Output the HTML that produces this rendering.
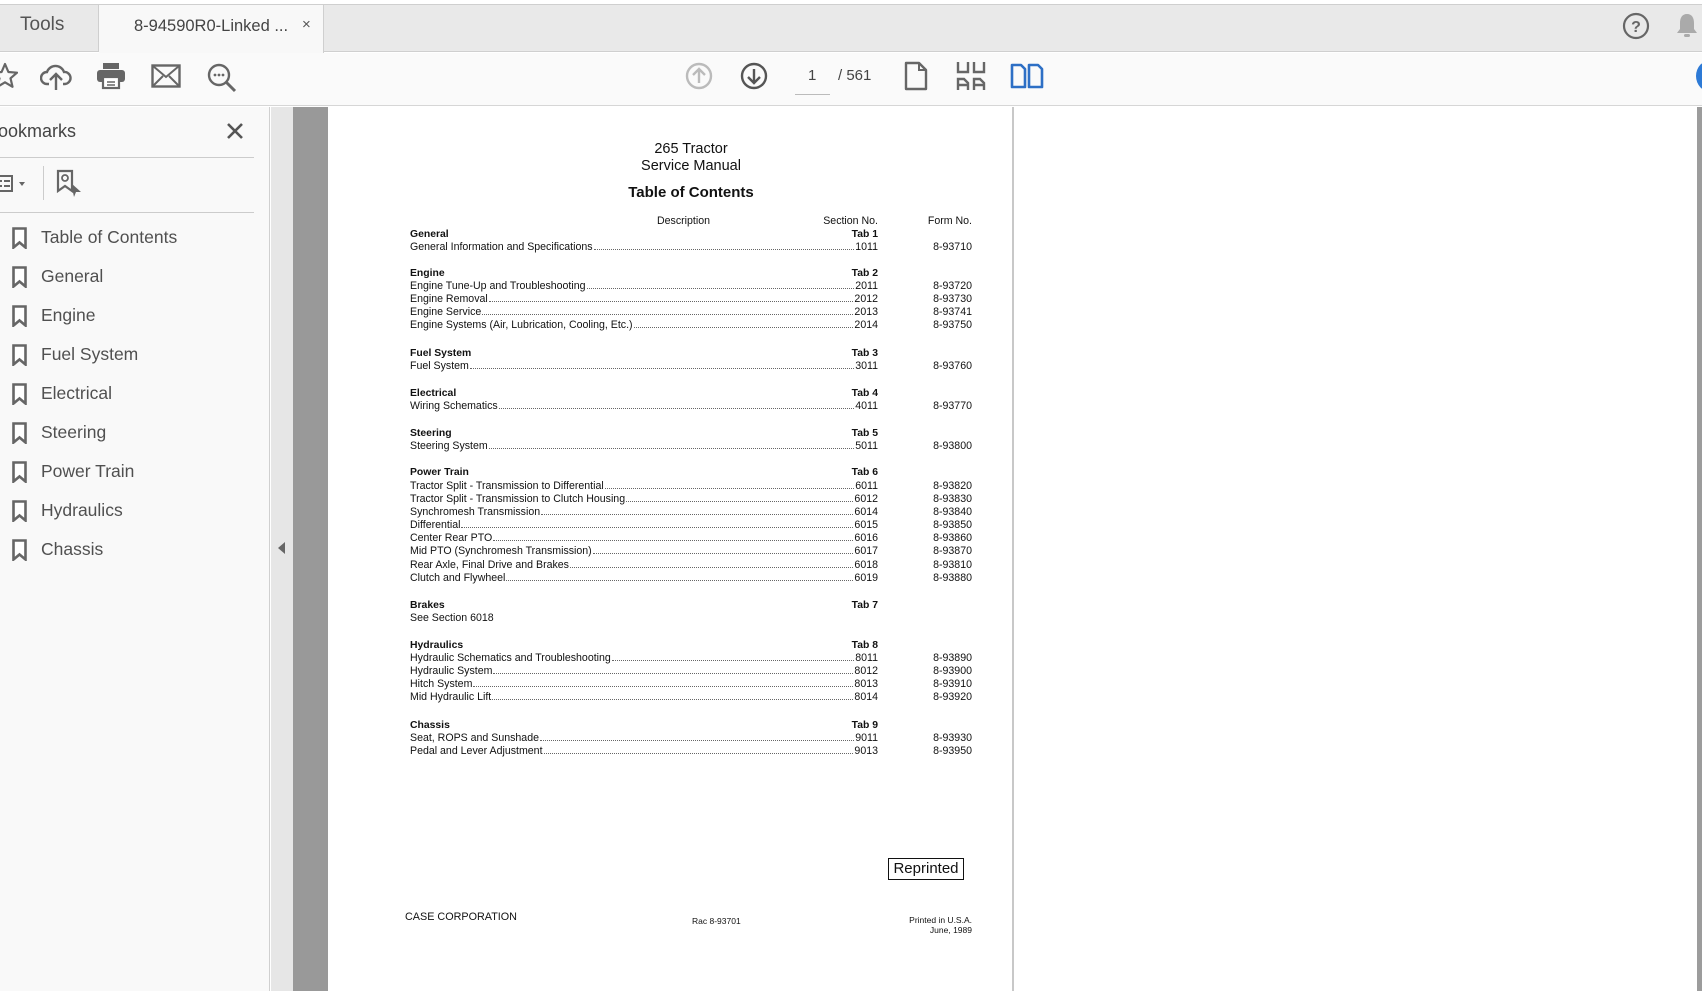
<!DOCTYPE html>
<html><head><meta charset="utf-8"><style>
*{margin:0;padding:0;box-sizing:border-box}
body{width:1702px;height:991px;overflow:hidden;background:#fff;font-family:"Liberation Sans",sans-serif;position:relative}
.a{position:absolute}
.ui{font-family:"Liberation Sans","DejaVu Sans",sans-serif}
.pg{font-family:"Liberation Sans",sans-serif;color:#111;font-size:10.6px;white-space:nowrap}
.row{position:absolute;left:410px;width:468px;display:flex;align-items:baseline;height:13px;line-height:13px}
.row .f{flex:1;border-bottom:1px dotted #666;margin:0 1px 3px 1px;height:1px}
.fm{position:absolute;right:730px;line-height:13px}
.hd{position:absolute;left:410px;width:468px;line-height:13px;font-weight:bold;font-size:10.4px}
.hd span{float:right;font-weight:bold}
.bm{position:absolute;left:12px;height:39px;display:flex;align-items:center;color:#505050;font-size:17.5px;font-family:"Liberation Sans",sans-serif}
.bm svg{margin-right:14px}
</style></head><body>
<div class="a" style="left:0;top:0;width:1702px;height:4px;background:#fff"></div>
<div class="a" style="left:0;top:4px;width:1702px;height:1px;background:#cfcfcf"></div>
<div class="a" style="left:0;top:5px;width:1702px;height:47px;background:#e9e9e9;border-bottom:1px solid #cfcfcf"></div>
<div class="a ui" style="left:20px;top:14px;font-size:19px;color:#555">Tools</div>
<div class="a" style="left:98px;top:5px;width:1px;height:47px;background:#cfcfcf"></div>
<div class="a" style="left:99px;top:5px;width:225px;height:48px;background:#f8f8f8;border-right:1px solid #cfcfcf"></div>
<div class="a ui" style="left:134px;top:17px;font-size:16.5px;color:#444">8-94590R0-Linked ...</div>
<div class="a ui" style="left:302px;top:16px;font-size:15px;color:#555">×</div>
<svg class="a" style="left:1622px;top:12px" width="28" height="28" viewBox="0 0 28 28"><circle cx="14" cy="14" r="12" fill="none" stroke="#666" stroke-width="2.2"/><text x="14" y="20" text-anchor="middle" font-family="Liberation Sans" font-weight="bold" font-size="16" fill="#666">?</text></svg>
<svg class="a" style="left:1675px;top:12px" width="24" height="28" viewBox="0 0 24 28"><path d="M12 2c-5 0-7 4-7 9v6l-3 4h20l-3-4v-6c0-5-2-9-7-9z" fill="#aaa"/><rect x="9" y="22" width="6" height="3" rx="1.5" fill="#aaa"/></svg>
<div class="a" style="left:0;top:53px;width:1702px;height:53px;background:#fafafa;border-bottom:1px solid #d6d6d6"></div>
<svg class="a" style="left:-8px;top:62px" width="26" height="28" viewBox="0 0 26 28"><path d="M13 2l3.4 8 8.6.7-6.5 5.6 2 8.5L13 20.3 5.5 24.8l2-8.5L1 10.7 9.6 10z" fill="none" stroke="#666" stroke-width="2.2" stroke-linejoin="round"/></svg>
<svg class="a" style="left:40px;top:62px" width="32" height="30" viewBox="0 0 32 30"><path d="M9 22H7a6 6 0 0 1 0-12 9 9 0 0 1 17 0 6 6 0 0 1 1 12h-2" fill="none" stroke="#666" stroke-width="2.4"/><path d="M16 28V13M10 18l6-6 6 6" fill="none" stroke="#666" stroke-width="2.4"/></svg>
<svg class="a" style="left:96px;top:62px" width="30" height="28" viewBox="0 0 30 28"><rect x="7" y="1" width="16" height="6" fill="#666"/><rect x="1" y="8" width="28" height="12" rx="3" fill="#666"/><rect x="7" y="15" width="16" height="11" fill="#fff" stroke="#666" stroke-width="2.2"/><path d="M11 20h8M11 23h8" stroke="#666" stroke-width="1.4"/></svg>
<svg class="a" style="left:151px;top:64px" width="30" height="24" viewBox="0 0 30 24"><rect x="1.5" y="1.5" width="27" height="21" fill="none" stroke="#666" stroke-width="2.4"/><path d="M2 2l13 11L28 2M2 22l10-10M28 22L18 12" fill="none" stroke="#666" stroke-width="2"/></svg>
<svg class="a" style="left:206px;top:62px" width="32" height="32" viewBox="0 0 32 32"><circle cx="13" cy="13" r="10" fill="none" stroke="#666" stroke-width="2.4"/><path d="M20 20l9 9" stroke="#666" stroke-width="3"/><circle cx="9" cy="13" r="1.4" fill="#666"/><circle cx="13" cy="13" r="1.4" fill="#666"/><circle cx="17" cy="13" r="1.4" fill="#666"/></svg>
<svg class="a" style="left:685px;top:62px" width="28" height="28" viewBox="0 0 28 28"><circle cx="14" cy="14" r="12" fill="none" stroke="#bbb" stroke-width="2.4"/><path d="M14 21V7M8 13l6-6 6 6" fill="none" stroke="#bbb" stroke-width="2.4"/></svg>
<svg class="a" style="left:740px;top:62px" width="28" height="28" viewBox="0 0 28 28"><circle cx="14" cy="14" r="12" fill="none" stroke="#555" stroke-width="2.4"/><path d="M14 7v14M8 15l6 6 6-6" fill="none" stroke="#555" stroke-width="2.4"/></svg>
<div class="a ui" style="left:808px;top:67px;font-size:15px;color:#444">1</div>
<div class="a" style="left:795px;top:94px;width:35px;height:1px;background:#bbb"></div>
<div class="a ui" style="left:838px;top:67px;font-size:15px;color:#444">/ 561</div>
<svg class="a" style="left:904px;top:61px" width="24" height="30" viewBox="0 0 24 30"><path d="M2 2h13l7 7v19H2z" fill="none" stroke="#666" stroke-width="2.4" stroke-linejoin="round"/><path d="M15 2v7h7" fill="none" stroke="#666" stroke-width="2"/></svg>
<svg class="a" style="left:955px;top:61px" width="32" height="30" viewBox="0 0 32 30"><path d="M3 1v10h10V1M19 1v10h10V1M3 29V18h6l4 4v7M19 29V18h6l4 4v7M3 24h10M19 24h10" fill="none" stroke="#666" stroke-width="2.4"/></svg>
<svg class="a" style="left:1010px;top:63px" width="34" height="26" viewBox="0 0 34 26"><path d="M2 2h9l4 4v18H2z" fill="none" stroke="#2d6fc5" stroke-width="2.6" stroke-linejoin="round"/><path d="M19 2h9l4 4v18H19z" fill="none" stroke="#2d6fc5" stroke-width="2.6" stroke-linejoin="round"/></svg>
<div class="a" style="left:1696px;top:60px;width:30px;height:32px;border-radius:50%;background:#2d7ad6"></div>
<div class="a" style="left:0;top:107px;width:270px;height:884px;background:#f9f9f9;border-right:1px solid #d0d0d0"></div>
<div class="a ui" style="left:-2px;top:121px;font-size:18px;color:#444">ookmarks</div>
<svg class="a" style="left:226px;top:122px" width="18" height="18" viewBox="0 0 18 18"><path d="M2 2l14 14M16 2L2 16" stroke="#555" stroke-width="2.6"/></svg>
<div class="a" style="left:0;top:157px;width:254px;height:1px;background:#ccc"></div>
<svg class="a" style="left:-4px;top:174px" width="40" height="20" viewBox="0 0 40 20"><rect x="1" y="2" width="15" height="15" fill="none" stroke="#666" stroke-width="2"/><path d="M4 7h2M8 7h6M4 12h2M8 12h6" stroke="#666" stroke-width="2"/><path d="M23 8h6l-3 4z" fill="#666"/></svg>
<div class="a" style="left:43px;top:166px;width:1px;height:34px;background:#ccc"></div>
<svg class="a" style="left:56px;top:169px" width="28" height="30" viewBox="0 0 28 30"><path d="M2 2h14v20l-7-5-7 5z" fill="none" stroke="#666" stroke-width="2.2"/><circle cx="9" cy="9" r="3" fill="none" stroke="#666" stroke-width="1.8"/><path d="M15 14l10 9-5 0-2 5z" fill="#666"/></svg>
<div class="a" style="left:0;top:212px;width:254px;height:1px;background:#ccc"></div>
<div class="bm" style="top:218px"><svg width="15" height="22" viewBox="0 0 15 22"><path d="M1.5 1.5h12v19l-6-5-6 5z" fill="#fff" stroke="#666" stroke-width="2.6"/></svg>Table of Contents</div>
<div class="bm" style="top:257px"><svg width="15" height="22" viewBox="0 0 15 22"><path d="M1.5 1.5h12v19l-6-5-6 5z" fill="#fff" stroke="#666" stroke-width="2.6"/></svg>General</div>
<div class="bm" style="top:296px"><svg width="15" height="22" viewBox="0 0 15 22"><path d="M1.5 1.5h12v19l-6-5-6 5z" fill="#fff" stroke="#666" stroke-width="2.6"/></svg>Engine</div>
<div class="bm" style="top:335px"><svg width="15" height="22" viewBox="0 0 15 22"><path d="M1.5 1.5h12v19l-6-5-6 5z" fill="#fff" stroke="#666" stroke-width="2.6"/></svg>Fuel System</div>
<div class="bm" style="top:374px"><svg width="15" height="22" viewBox="0 0 15 22"><path d="M1.5 1.5h12v19l-6-5-6 5z" fill="#fff" stroke="#666" stroke-width="2.6"/></svg>Electrical</div>
<div class="bm" style="top:413px"><svg width="15" height="22" viewBox="0 0 15 22"><path d="M1.5 1.5h12v19l-6-5-6 5z" fill="#fff" stroke="#666" stroke-width="2.6"/></svg>Steering</div>
<div class="bm" style="top:452px"><svg width="15" height="22" viewBox="0 0 15 22"><path d="M1.5 1.5h12v19l-6-5-6 5z" fill="#fff" stroke="#666" stroke-width="2.6"/></svg>Power Train</div>
<div class="bm" style="top:491px"><svg width="15" height="22" viewBox="0 0 15 22"><path d="M1.5 1.5h12v19l-6-5-6 5z" fill="#fff" stroke="#666" stroke-width="2.6"/></svg>Hydraulics</div>
<div class="bm" style="top:530px"><svg width="15" height="22" viewBox="0 0 15 22"><path d="M1.5 1.5h12v19l-6-5-6 5z" fill="#fff" stroke="#666" stroke-width="2.6"/></svg>Chassis</div>
<div class="a" style="left:271px;top:107px;width:22px;height:884px;background:#e6e6e6"></div>
<svg class="a" style="left:278px;top:542px" width="8" height="12" viewBox="0 0 8 12"><path d="M7 0v12L0 6z" fill="#666"/></svg>
<div class="a" style="left:293px;top:107px;width:35px;height:884px;background:#999"></div>
<div class="a" style="left:1012px;top:107px;width:2px;height:884px;background:#c8c8c8"></div>
<div class="a" style="left:1697px;top:107px;width:5px;height:884px;background:#9c9c9c"></div>
<div class="pg">
<div class="a" style="left:591px;width:200px;top:141px;text-align:center;font-size:14.5px;line-height:17px">265 Tractor<br>Service Manual</div>
<div class="a" style="left:591px;width:200px;top:184px;text-align:center;font-size:15px;font-weight:bold">Table of Contents</div>
<div class="a" style="left:657px;top:215px">Description</div>
<div class="a" style="right:824px;top:215px">Section No.</div>
<div class="a" style="right:730px;top:215px">Form No.</div>

<div class="hd" style="top:228px">General<span>Tab 1</span></div>
<div class="row" style="top:241px"><span>General Information and Specifications</span><i class="f"></i><span>1011</span></div><div class="fm" style="top:241px">8-93710</div>

<div class="hd" style="top:267px">Engine<span>Tab 2</span></div>
<div class="row" style="top:280px"><span>Engine Tune-Up and Troubleshooting</span><i class="f"></i><span>2011</span></div><div class="fm" style="top:280px">8-93720</div>
<div class="row" style="top:293px"><span>Engine Removal</span><i class="f"></i><span>2012</span></div><div class="fm" style="top:293px">8-93730</div>
<div class="row" style="top:306px"><span>Engine Service</span><i class="f"></i><span>2013</span></div><div class="fm" style="top:306px">8-93741</div>
<div class="row" style="top:319px"><span>Engine Systems (Air, Lubrication, Cooling, Etc.)</span><i class="f"></i><span>2014</span></div><div class="fm" style="top:319px">8-93750</div>

<div class="hd" style="top:347px">Fuel System<span>Tab 3</span></div>
<div class="row" style="top:360px"><span>Fuel System</span><i class="f"></i><span>3011</span></div><div class="fm" style="top:360px">8-93760</div>

<div class="hd" style="top:387px">Electrical<span>Tab 4</span></div>
<div class="row" style="top:400px"><span>Wiring Schematics</span><i class="f"></i><span>4011</span></div><div class="fm" style="top:400px">8-93770</div>

<div class="hd" style="top:427px">Steering<span>Tab 5</span></div>
<div class="row" style="top:440px"><span>Steering System</span><i class="f"></i><span>5011</span></div><div class="fm" style="top:440px">8-93800</div>

<div class="hd" style="top:466px">Power Train<span>Tab 6</span></div>
<div class="row" style="top:480px"><span>Tractor Split - Transmission to Differential</span><i class="f"></i><span>6011</span></div><div class="fm" style="top:480px">8-93820</div>
<div class="row" style="top:493px"><span>Tractor Split - Transmission to Clutch Housing</span><i class="f"></i><span>6012</span></div><div class="fm" style="top:493px">8-93830</div>
<div class="row" style="top:506px"><span>Synchromesh Transmission</span><i class="f"></i><span>6014</span></div><div class="fm" style="top:506px">8-93840</div>
<div class="row" style="top:519px"><span>Differential</span><i class="f"></i><span>6015</span></div><div class="fm" style="top:519px">8-93850</div>
<div class="row" style="top:532px"><span>Center Rear PTO</span><i class="f"></i><span>6016</span></div><div class="fm" style="top:532px">8-93860</div>
<div class="row" style="top:545px"><span>Mid PTO (Synchromesh Transmission)</span><i class="f"></i><span>6017</span></div><div class="fm" style="top:545px">8-93870</div>
<div class="row" style="top:559px"><span>Rear Axle, Final Drive and Brakes</span><i class="f"></i><span>6018</span></div><div class="fm" style="top:559px">8-93810</div>
<div class="row" style="top:572px"><span>Clutch and Flywheel</span><i class="f"></i><span>6019</span></div><div class="fm" style="top:572px">8-93880</div>

<div class="hd" style="top:599px">Brakes<span>Tab 7</span></div>
<div class="a" style="left:410px;top:612px;line-height:13px">See Section 6018</div>

<div class="hd" style="top:639px">Hydraulics<span>Tab 8</span></div>
<div class="row" style="top:652px"><span>Hydraulic Schematics and Troubleshooting</span><i class="f"></i><span>8011</span></div><div class="fm" style="top:652px">8-93890</div>
<div class="row" style="top:665px"><span>Hydraulic System</span><i class="f"></i><span>8012</span></div><div class="fm" style="top:665px">8-93900</div>
<div class="row" style="top:678px"><span>Hitch System</span><i class="f"></i><span>8013</span></div><div class="fm" style="top:678px">8-93910</div>
<div class="row" style="top:691px"><span>Mid Hydraulic Lift</span><i class="f"></i><span>8014</span></div><div class="fm" style="top:691px">8-93920</div>

<div class="hd" style="top:719px">Chassis<span>Tab 9</span></div>
<div class="row" style="top:732px"><span>Seat, ROPS and Sunshade</span><i class="f"></i><span>9011</span></div><div class="fm" style="top:732px">8-93930</div>
<div class="row" style="top:745px"><span>Pedal and Lever Adjustment</span><i class="f"></i><span>9013</span></div><div class="fm" style="top:745px">8-93950</div>

<div class="a" style="left:888px;top:858px;width:76px;height:22px;border:1.5px solid #111;text-align:center;font-size:15px;line-height:19px">Reprinted</div>
<div class="a" style="left:405px;top:911px;font-size:10.8px">CASE CORPORATION</div>
<div class="a" style="left:692px;top:916px;font-size:8.5px">Rac 8-93701</div>
<div class="a" style="right:730px;top:915px;font-size:8.5px;text-align:right;line-height:10px">Printed in U.S.A.<br>June, 1989</div>
</div>
</body></html>
